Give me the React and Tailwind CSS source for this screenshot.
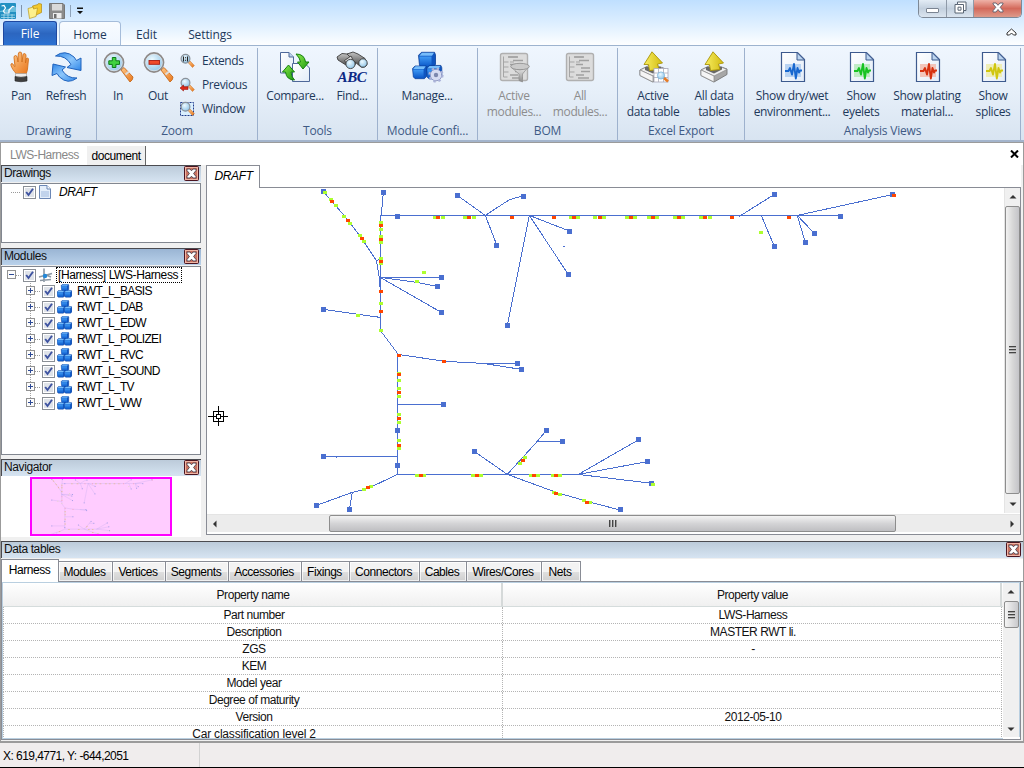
import React from "react";

const UI = "font-['Open_Sans','Noto_Sans',sans-serif]";
const SANS = "font-['Liberation_Sans',Arial,sans-serif]";

/* ---------- shared gradients ---------- */
function Defs() {
  return (
    <svg className="absolute h-0 w-0" aria-hidden="true">
      <defs>
        <linearGradient id="orange" x1="0" y1="0" x2="1" y2="1">
          <stop offset="0" stopColor="#ffc98a" />
          <stop offset="1" stopColor="#e8751a" />
        </linearGradient>
        <linearGradient id="blue" x1="0" y1="0" x2="0" y2="1">
          <stop offset="0" stopColor="#3f9af5" />
          <stop offset="1" stopColor="#0b57c8" />
        </linearGradient>
        <linearGradient id="sky" x1="0" y1="0" x2="1" y2="1">
          <stop offset="0" stopColor="#2f86e8" />
          <stop offset="0.5" stopColor="#8cc6fb" />
          <stop offset="1" stopColor="#2f86e8" />
        </linearGradient>
        <linearGradient id="green" x1="0" y1="0" x2="1" y2="1">
          <stop offset="0" stopColor="#8eea4a" />
          <stop offset="1" stopColor="#1d9b12" />
        </linearGradient>
        <linearGradient id="yellow" x1="0" y1="0" x2="1" y2="0">
          <stop offset="0" stopColor="#f8ee62" />
          <stop offset="1" stopColor="#d2bb10" />
        </linearGradient>
        <radialGradient id="lens" cx="0.4" cy="0.35" r="0.7">
          <stop offset="0" stopColor="#eefaff" />
          <stop offset="1" stopColor="#8cc2e6" />
        </radialGradient>
        <linearGradient id="paper" x1="0" y1="0" x2="1" y2="1">
          <stop offset="0" stopColor="#ffffff" />
          <stop offset="1" stopColor="#e2ecf8" />
        </linearGradient>
        <linearGradient id="steel" x1="0" y1="0" x2="0" y2="1">
          <stop offset="0" stopColor="#f4f4f4" />
          <stop offset="1" stopColor="#8c8c8c" />
        </linearGradient>
        <linearGradient id="dark" x1="0" y1="0" x2="0" y2="1">
          <stop offset="0" stopColor="#c4c4c4" />
          <stop offset="1" stopColor="#3c3c3c" />
        </linearGradient>
      </defs>
    </svg>
  );
}

const Icon = ({ children, size = 32 }) => (
  <svg viewBox="0 0 32 32" width={size} height={size} className="block shrink-0">
    {children}
  </svg>
);

const HandIcon = () => (
  <Icon>
    <path d="M11.500 23C8.500 19.500 7 17.500 6 14.500Q5.500 12.500 7 12.500Q8 12.500 9.500 15.500L10 15.500L9 6.500Q9 4.500 10.500 4.500Q12 4.500 12.300 6.500L13 11L13.300 3Q13.500 1 15 1Q16.700 1 16.800 3L17 11L18 4Q18.300 2.300 19.700 2.600Q21.200 3 21 5L20.500 12L21.200 8Q21.800 6.600 22.700 7Q23.700 7.500 23.400 9L22.500 18Q22 21 21 23Z" fill="url(#orange)" stroke="#d2701c" strokeWidth="0.900" />
    <path d="M10.500 22.500h11v3.500h-11z" fill="#ececec" stroke="#999" strokeWidth="0.600" />
    <path d="M10 25.500Q16 27.500 22 25.500V30Q16 31.500 10 30z" fill="#3f3f3f" stroke="#222" strokeWidth="0.600" />
  </Icon>
);

const RefreshIcon = () => (
  <Icon>
    <g stroke="#1f62bd" strokeWidth="1" strokeLinejoin="round" fill="url(#sky)">
      <path d="M5.500 5Q15-2 24 6L26.500 9.500L31 7V19.500L17 16.500L21 13.500Q16 4.500 5.500 5Z" />
      <path d="M27 27Q18 34 9.500 26L7 22.500L2 24.500L3 13L15.500 16L12 19Q17 27.500 27 27Z" />
    </g>
  </Icon>
);

const ZoomIcon = ({ minus }) => (
  <Icon>
    <path d="M19 19L22 16.500L31 26Q31 29 28 31Z" fill="url(#orange)" stroke="#c66a1c" strokeWidth="0.900" />
    <path d="M23.500 23.500L27 20.500" stroke="#ddd" strokeWidth="2" />
    <circle cx="12" cy="11.500" r="9.500" fill="url(#lens)" stroke="#8f8a88" strokeWidth="1.800" />
    <circle cx="12" cy="11.500" r="8.300" fill="none" stroke="#e4e8ec" strokeWidth="0.700" />
    {minus ? (
      <rect x="7" y="9.500" width="10.500" height="3.800" fill="#f04a2a" stroke="#a81c10" strokeWidth="0.900" />
    ) : (
      <path d="M10.300 6.500h3.600v3.300h3.600v3.600h-3.600v3.100h-3.600v-3.100H6.800V9.800h3.500z" fill="#3fd23f" stroke="#0c7a18" strokeWidth="1" />
    )}
  </Icon>
);

const MiniZoom = ({ kind }) => (
  <svg viewBox="0 0 16 16" width="16" height="16" className="block shrink-0">
    {kind === "window" && <rect x="1.500" y="1.500" width="13" height="13" fill="#d9efff" stroke="#203c8c" strokeWidth="1" strokeDasharray="2 1" />}
    <path d="M9 9.500L11 8L15.300 12.500L13.500 14.500Z" fill="url(#orange)" stroke="#c66a1c" strokeWidth="0.500" />
    <circle cx="6.500" cy="5.800" r="4.400" fill="url(#lens)" stroke="#8b929a" strokeWidth="1.200" />
    {kind === "extends" && <path d="M4.500 3.500v5M8.500 3.500v5M6.500 4.300v1M6.500 6.800v1" stroke="#222" strokeWidth="1.100" />}
    {kind === "previous" && <path d="M1 11l3.500-3v1.800H9v2.600H4.500V14z" fill="#e02a1a" stroke="#981008" strokeWidth="0.600" />}
  </svg>
);

const CompareIcon = () => (
  <Icon>
    <path d="M1.500 1.500H10L14.500 6V22H1.500Z" fill="url(#paper)" stroke="#4e6899" />
    <path d="M10 1.500V6H14.500" fill="#bcd3ee" stroke="#4e6899" />
    <path d="M13.500 12.500H26L30.500 17V30.500H13.500Z" fill="url(#paper)" stroke="#4e6899" />
    <path d="M17 3Q25.500 3 26.500 11H30L24 18L18.500 11H21.500Q21 7 17 3Z" fill="url(#green)" stroke="#15800f" />
    <path d="M15.500 29Q7.500 29 6.500 21H3.500L9.500 14L15.500 21H12Q12 25.500 15.500 29Z" fill="url(#green)" stroke="#15800f" />
  </Icon>
);

const FindIcon = () => (
  <svg viewBox="0 0 34 32" width="34" height="32" className="block shrink-0 overflow-visible">
    <g stroke="#3d3d3d" strokeWidth="0.900">
      <path d="M2 6L7 2.500L12 3L22 6.500L20 14Q17 18 12.500 15L3 9Z" fill="url(#dark)" />
      <path d="M12 3L18 1L23 3L30 7.500L32 13Q31 17 26 16L20 11Z" fill="url(#dark)" />
      <path d="M9.500 9.500L13 15L19 11L16 5Z" fill="url(#steel)" />
      <circle cx="15.500" cy="13" r="4.600" fill="url(#lens)" />
      <circle cx="28" cy="12" r="4.200" fill="url(#lens)" />
    </g>
    <text x="2.500" y="31" fontFamily="Liberation Serif, serif" fontStyle="italic" fontWeight="bold" fontSize="15.500" textLength="29" lengthAdjust="spacingAndGlyphs" fill="#0d2a86">ABC</text>
  </svg>
);

const Cube = ({ x, y, s = 1 }) => (
  <g transform={`translate(${x} ${y}) scale(${s})`}>
    <path d="M0 3.500L3 0.500H16L17 3V12.500L14 15.500H3L1 13.500Z" fill="#0f55c0" stroke="#0b3f98" strokeWidth="0.800" />
    <path d="M0.800 4L3.500 1H15.500L13.500 4Z" fill="#76bdfb" />
    <path d="M0.800 4.800H13V14.800H3L1.500 13Z" fill="url(#blue)" />
  </g>
);

const ManageIcon = () => (
  <svg viewBox="0 0 34 32" width="34" height="32" className="block shrink-0">
    <Cube x={8.500} y={0.800} />
    <Cube x={2.500} y={14.500} s={0.85} />
    <Cube x={16.500} y={14} s={0.9} />
    <circle cx="26" cy="24" r="5.800" fill="#d6dcf2" stroke="#8089b8" strokeWidth="0.800" />
    <circle cx="26" cy="24" r="6.500" fill="none" stroke="#aab2d8" strokeWidth="2.200" strokeDasharray="2.400 2.700" />
    <circle cx="26" cy="24" r="2.200" fill="#7d88ae" />
  </svg>
);

const ListIcon = ({ funnel }) => (
  <Icon>
    <rect x="2.500" y="2.500" width="27" height="27" rx="2" fill="#dcdcdc" stroke="#b0b0b0" strokeWidth="1.400" />
    <path d="M5.500 5.500v20.500h4M5.500 11h5M5.500 16h5M5.500 21h5M10.500 6h9M12 11h4" stroke="#a5a5a5" strokeWidth="1" fill="none" />
    <path d="M10 6h10M15 9.500h10M12 13.500h7M17 17h9M17 20.500h9M12 24h8M14 27h11" stroke="#a0a0a0" strokeWidth="1.500" />
    {funnel && (
      <>
        <path d="M13 16Q22 22 31 15L24.500 23V31L21 29.500V23Z" fill="url(#steel)" stroke="#8d8d8d" strokeWidth="0.700" />
        <ellipse cx="22" cy="15.500" rx="9.300" ry="3.200" fill="#cacaca" stroke="#8a8a8a" strokeWidth="0.800" />
      </>
    )}
  </Icon>
);

const ExportIcon = ({ grid }) => (
  <Icon>
    <path d="M3 19L15 13L29 18V23.500L16 31L3 24.500Z" fill="#a7a7a7" stroke="#777" strokeWidth="0.900" />
    <path d="M3 19L16 25L29 18.500L16 13Z" fill="#efefef" stroke="#8a8a8a" strokeWidth="0.700" />
    <path d="M3 19L16 25V31L3 24.500Z" fill="#f5f5f5" stroke="#888" strokeWidth="0.700" />
    <path d="M8 19L16 22.500L24 18.500V16H8Z" fill="#696969" />
    <path d="M15 0.800L25.500 12L20.500 13L22 18.500L12.500 19.500L11.500 13.500L7 13.500Z" fill="url(#yellow)" stroke="#a99408" strokeWidth="0.900" strokeLinejoin="round" />
    {grid && (
      <>
        <rect x="17" y="17.500" width="14" height="13.500" fill="#fff" stroke="#a9a9b8" strokeWidth="0.800" />
        <path d="M21.500 17.500v13.500M26.500 17.500v13.500M17 22h14M17 26.500h14" stroke="#a9a9b8" strokeWidth="0.800" />
        <path d="M26.500 26.500L31 30.500" stroke="#e87a22" strokeWidth="2.600" />
        <circle cx="24" cy="24.500" r="3.600" fill="url(#lens)" stroke="#7fb6dc" strokeWidth="0.800" />
      </>
    )}
  </Icon>
);

const WaveIcon = ({ c, tint }) => (
  <Icon>
    <path d="M5.500 1.500H21.500L28.500 8.500V30.500H5.500Z" fill="url(#paper)" stroke="#3d5a8e" strokeWidth="1.200" />
    <path d="M21 1.500V9H28.500Z" fill="#bcd5f0" stroke="#3d5a8e" strokeWidth="1" />
    <rect x="9" y="13" width="16" height="13" fill={tint} />
    <path d="M9 20H12.500L14 17L16 23.500L18 13L19.800 27.500L21.500 17L23 21.500L24 19.500H26" fill="none" stroke={c} strokeWidth="1.900" strokeLinejoin="round" />
  </Icon>
);

/* ---------- ribbon ---------- */
const Btn = ({ icon, l1, l2, w, off }) => (
  <div className={`${w} flex shrink-0 flex-col items-center pt-[3px] text-[12px] leading-4 tracking-[-0.350px] whitespace-nowrap ${off ? "text-[#8d8d8d]" : "text-[#1e395b]"}`}>
    {icon}
    <span className="mt-[5px]">{l1}</span>
    {l2 && <span>{l2}</span>}
  </div>
);

const Group = ({ label, w, pl = "", children }) => (
  <div className={`${w} flex shrink-0 flex-col border-r border-[#9db1cd]`}>
    <div className={`flex h-[75px] ${pl}`}>{children}</div>
    <div className="text-center text-[12px] leading-4 tracking-[-0.2px] whitespace-nowrap text-[#3e5a85]">{label}</div>
  </div>
);

const Small = ({ kind, label }) => (
  <div className="flex h-6 items-center gap-[7px] text-[12px] tracking-[-0.4px] text-[#1e395b]">
    <MiniZoom kind={kind} />
    {label}
  </div>
);

function Ribbon() {
  return (
    <div className={`${UI} flex h-[96px] shrink-0 border-b-2 border-[#a3b4cc] bg-linear-to-b from-[#eff6fe] via-[#e6eff9] to-[#d8e4f1] pt-[2px] pl-px`}>
      <Group label="Drawing" w="w-[96px]">
        <Btn w="w-[40px]" icon={<HandIcon />} l1="Pan" />
        <Btn w="w-[50px]" icon={<RefreshIcon />} l1="Refresh" />
      </Group>
      <Group label="Zoom" w="w-[161px]" pl="pl-px">
        <Btn w="w-[40px]" icon={<ZoomIcon />} l1="In" />
        <Btn w="w-[40px]" icon={<ZoomIcon minus />} l1="Out" />
        <div className="flex flex-col pt-px pl-px">
          <Small kind="extends" label="Extends" />
          <Small kind="previous" label="Previous" />
          <Small kind="window" label="Window" />
        </div>
      </Group>
      <Group label="Tools" w="w-[120px]" pl="pl-[5px]">
        <Btn w="w-[64px]" icon={<CompareIcon />} l1="Compare..." />
        <Btn w="w-[50px]" icon={<FindIcon />} l1="Find..." />
      </Group>
      <Group label="Module Confi..." w="w-[100px]">
        <Btn w="w-[98px]" icon={<ManageIcon />} l1="Manage..." />
      </Group>
      <Group label="BOM" w="w-[140px]" pl="pl-[3px]">
        <Btn w="w-[66px]" off icon={<ListIcon funnel />} l1="Active" l2="modules..." />
        <Btn w="w-[66px]" off icon={<ListIcon />} l1="All" l2="modules..." />
      </Group>
      <Group label="Excel Export" w="w-[127px]" pl="pl-[4px]">
        <Btn w="w-[62px]" icon={<ExportIcon grid />} l1="Active" l2="data table" />
        <Btn w="w-[60px]" icon={<ExportIcon />} l1="All data" l2="tables" />
      </Group>
      <Group label="Analysis Views" w="w-[276px]" pl="pl-[3px]">
        <Btn w="w-[88px]" icon={<WaveIcon c="#1767cf" tint="#b9d3f2" />} l1="Show dry/wet" l2="environment..." />
        <Btn w="w-[50px]" icon={<WaveIcon c="#17c322" tint="#c0ecc6" />} l1="Show" l2="eyelets" />
        <Btn w="w-[82px]" icon={<WaveIcon c="#d6300e" tint="#f3c5ba" />} l1="Show plating" l2="material..." />
        <Btn w="w-[50px]" icon={<WaveIcon c="#d0c60e" tint="#efeeb8" />} l1="Show" l2="splices" />
      </Group>
    </div>
  );
}

function TitleArea() {
  return (
    <div className={`${UI} flex h-[46px] shrink-0 flex-col border-b border-[#9db3cf] bg-linear-to-b from-[#bfdfff] via-[#dceeff] to-[#fdfeff]`}>
      <div className="flex h-[22px] justify-between">
        <div className="flex items-center">
          <svg width="16" height="16" viewBox="0 0 16 16" className="block">
            <rect width="16" height="16" rx="1" fill="#2290c2" />
            <path d="M0 8L16 4V9H0z" fill="#67bcdc" />
            <path d="M1.500 3L4 2.500L5.500 5L3.500 8L4.500 10H9V7L12.500 3.500L14.500 4" fill="none" stroke="#fff" strokeWidth="1.200" />
            <path d="M1 12h14M1 14.500h14M4 11v5M8 11v5M12 11v5" stroke="#a9dcee" strokeWidth="0.800" />
          </svg>
          <div className="mx-[5px] h-[12px] w-px bg-[#7f94ad]" />
          <svg width="16" height="16" viewBox="0 0 16 16" className="block">
            <path d="M5.500 3L11 1.500L11.500 0.500L14.500 1L14.500 9.500L7 13Z" fill="#f3c92d" stroke="#b08a12" strokeWidth="0.700" />
            <path d="M1 5.500L6.500 4V6L10.500 5L9 13.500L2.500 15.500Z" fill="#fdf08d" stroke="#bb9a1c" strokeWidth="0.700" />
          </svg>
          <svg width="16" height="16" viewBox="0 0 16 16" className="ml-[6px] block">
            <path d="M0.500 0.500H14L15.500 2V15.500H0.500Z" fill="#8b8b8b" stroke="#777" />
            <rect x="3" y="1" width="10" height="6.500" fill="#d9d9d9" />
            <rect x="4" y="10" width="8.500" height="5.500" fill="#ececec" />
            <rect x="5" y="11" width="2.500" height="4" fill="#6d6d6d" />
          </svg>
          <div className="ml-[5px] h-[12px] w-px bg-[#8fa3ba]" />
          <svg width="6" height="8" viewBox="0 0 6 8" className="ml-[6px] block">
            <path d="M0 0.500h6v1.500H0zM0 4h6L3 7z" fill="#111" />
          </svg>
        </div>
        <div className="mr-[2px] flex h-[18px] w-[104px] overflow-hidden rounded-b-[5px] border border-t-0 border-[#7d8896]">
          <div className="flex w-[28px] items-center justify-center border-r border-[#8f9aa8] bg-linear-to-b from-[#e3ecf5] via-[#c3d0de] to-[#dbe5ef]">
            <div className="mt-[4px] h-[5px] w-[13px] rounded-[1px] border border-[#7a8492] bg-white" />
          </div>
          <div className="flex w-[27px] items-center justify-center border-r border-[#8f9aa8] bg-linear-to-b from-[#e3ecf5] via-[#c3d0de] to-[#dbe5ef]">
            <svg width="13" height="13" viewBox="0 0 13 13" className="-mt-[2px]">
              <path d="M3.500 1H12V9.500H9.500V12H1V3.500H3.500Z" fill="#fff" stroke="#596473" />
              <path d="M3.500 3.500H9.500V9.500M4 6.200h3v3h-3z" fill="none" stroke="#596473" />
            </svg>
          </div>
          <div className="flex flex-1 items-center justify-center bg-linear-to-b from-[#eeb2a8] via-[#d3695b] to-[#dd9a8a]">
            <svg width="12" height="11" viewBox="0 0 12 11" className="-mt-[2px]">
              <path d="M1 1H4L6 3.300L8 1H11V2L8.200 5.300L11 8.800V10H8L6 7.500L4 10H1V8.800L3.800 5.300L1 2Z" fill="#fff" stroke="#5f5f6c" strokeWidth="0.900" />
            </svg>
          </div>
        </div>
      </div>
      <div className="flex h-[24px] pl-[3px] text-[12px] tracking-[-0.1px] text-[#1e395b]">
        <div className="flex h-[24px] w-[54px] items-center justify-center rounded-t-[3px] border border-b-0 border-[#1e48a0] bg-linear-to-b from-[#4b8be0] via-[#2c66c0] to-[#2b71d2] text-[12px] text-white">File</div>
        <div className="ml-[2px] flex h-[24px] w-[62px] items-center justify-center rounded-t-[4px] border border-b-0 border-[#a5bcda] bg-linear-to-b from-[#f8fbff] to-[#eff6fe] pt-[2px]">Home</div>
        <div className="flex w-[51px] items-center justify-center pt-[3px]">Edit</div>
        <div className="flex w-[76px] items-center justify-center pt-[3px]">Settings</div>
        <svg width="11" height="9" viewBox="0 0 11 9" className="mt-[7px] mr-[7px] ml-auto">
          <path d="M1 5L5.500 1L10 5V7H7.500L5.500 5L3.500 7H1Z" fill="#fff" stroke="#333" />
        </svg>
      </div>
    </div>
  );
}

/* ---------- side panels ---------- */
const CloseBox = () => (
  <svg width="15" height="15" viewBox="0 0 15 15" className="block">
    <rect x="0.500" y="0.500" width="14" height="14" rx="1" fill="#c9705f" stroke="#4a1420" />
    <rect x="1.500" y="1.500" width="12" height="12" fill="none" stroke="#f0b5a4" />
    <path d="M3 3H6L7.500 4.800L9 3H12V4.500L9.600 7.500L12 10.500V12H9L7.500 10.200L6 12H3V10.500L5.400 7.500L3 4.500Z" fill="#fff" stroke="#4d4450" strokeWidth="0.900" />
  </svg>
);

const PanelHead = ({ title, active }) => (
  <div className={`flex h-[17px] shrink-0 items-start justify-between border-t border-l border-[#4b4b50] pr-[2px] pl-[2px] text-[12px] tracking-[-0.4px] text-[#101010] ${active ? "bg-linear-to-b from-[#9ab5d4] to-[#b9d1ea]" : "bg-linear-to-b from-[#bccbda] to-[#d6e4f2]"}`}>
    <span className="leading-[15px]">{title}</span>
    <CloseBox />
  </div>
);

const Check = () => (
  <svg width="13" height="13" viewBox="0 0 13 13" className="block shrink-0">
    <rect x="0.500" y="0.500" width="12" height="12" fill="#fff" stroke="#8a8f96" />
    <rect x="2" y="2" width="9" height="9" fill="#dfe3e9" />
    <path d="M3.200 6L5.500 9L10 2.800" fill="none" stroke="#3d52a0" strokeWidth="1.900" />
  </svg>
);

const Expander = ({ open, last }) => (
  <svg width="9" height="16" viewBox="0 0 9 16" className="block shrink-0" shapeRendering="crispEdges">
    {!open && <path d={last ? "M4.500 0v4" : "M4.500 0v16"} stroke="#a0a0a0" strokeDasharray="1 1" />}
    <rect x="0.500" y="3.500" width="8" height="8" fill="#fcfcfc" stroke="#929292" />
    <path d={open ? "M2 7.500h5" : "M2 7.500h5M4.500 5v5"} stroke="#2d4a96" />
  </svg>
);

const CubesIcon = () => (
  <svg width="15" height="14" viewBox="0 0 33 31" className="block shrink-0">
    <Cube x={9} y={0} />
    <Cube x={0} y={14} />
    <Cube x={16} y={14} />
  </svg>
);

const modules = ["RWT_L_BASIS", "RWT_L_DAB", "RWT_L_EDW", "RWT_L_POLIZEI", "RWT_L_RVC", "RWT_L_SOUND", "RWT_L_TV", "RWT_L_WW"];

const BLUE = "#4a6fd0";

const lines = [
  "323,191 348,220 362,239 376,260 379,277 380,290",
  "383,192 381,215",
  "380,215 840,215",
  "380,215 380,330 398,354",
  "376,260 380,259",
  "457,195 485,215 508,200 516,197 523,196",
  "485,215 497,246",
  "529,215 507,325",
  "529,215 568,274",
  "529,215 570,231",
  "739,216 774,194",
  "761,215 774,246",
  "797,215 893,194",
  "797,215 814,233",
  "797,215 805,242",
  "379,277 441,277",
  "380,277 417,282 437,286",
  "380,277 441,312",
  "323,309 380,317",
  "398,354 445,361 483,363 517,363",
  "483,363 521,369",
  "397,354 397,474",
  "397,404 444,404",
  "323,456 398,456",
  "397,474 580,474",
  "397,474 368,488 352,492 316,505",
  "352,492 349,510",
  "474,451 507,474 536,442 546,430",
  "536,441 563,441",
  "507,474 556,492 587,501 621,510",
  "578,474 639,439",
  "578,474 648,461",
  "578,474 652,483",
];

const nodes = [
  [323, 191], [383, 192], [397, 216], [457, 195], [523, 196], [496, 245], [507, 325], [568, 274], [569, 231],
  [774, 194], [774, 246], [892, 194], [840, 216], [814, 233], [805, 242], [441, 277], [437, 286], [441, 312],
  [323, 309], [517, 363], [521, 369], [443, 404], [397, 430], [397, 465], [323, 456], [316, 505], [349, 509],
  [474, 451], [546, 430], [562, 441], [620, 509], [638, 439], [647, 461], [651, 483],
];

const greens = [
  [325, 192], [331, 199], [336, 205], [344, 216], [350, 223], [360, 235], [364, 241],
  [381, 222], [381, 229], [381, 236], [381, 242], [381, 258], [381, 263], [381, 303], [381, 330],
  [435, 217], [443, 217], [465, 217], [474, 217], [571, 217], [578, 217], [595, 217], [604, 217],
  [627, 217], [635, 217], [649, 217], [657, 217], [675, 217], [683, 217], [701, 217], [710, 217],
  [761, 232], [424, 272], [417, 281], [358, 315], [399, 373], [399, 380], [399, 388], [399, 396],
  [399, 414], [399, 422], [399, 440], [399, 448], [417, 475], [424, 475], [473, 475], [481, 475],
  [531, 475], [538, 475], [553, 475], [560, 475], [525, 457], [520, 463], [364, 489], [371, 486],
  [554, 492], [560, 494], [584, 500], [590, 502], [653, 484],
];

const reds = [
  [332, 201], [348, 220], [362, 238], [381, 225], [381, 239], [381, 261], [381, 291], [381, 311],
  [438, 217], [469, 217], [512, 217], [554, 217], [574, 217], [600, 217], [631, 217], [653, 217],
  [679, 217], [705, 217], [732, 217], [789, 217], [894, 195], [399, 355], [444, 361], [399, 374],
  [399, 392], [399, 418], [399, 445], [421, 475], [477, 475], [534, 475], [556, 475], [523, 460],
  [368, 487], [556, 493], [587, 502],
];

function Wiring() {
  return (
    <>
      {lines.map((p) => (
        <polyline key={p} points={p} fill="none" stroke={BLUE} strokeWidth="1" transform="translate(0.300 0.400)" />
      ))}
      {nodes.map(([x, y]) => (
        <rect key={`${x}-${y}`} x={x - 2} y={y - 2} width="5" height="5" fill={BLUE} />
      ))}
      {greens.map(([x, y]) => (
        <rect key={`${x}-${y}`} x={x - 2} y={y - 1} width="4" height="3" fill="#adff2f" />
      ))}
      {reds.map(([x, y]) => (
        <rect key={`${x}-${y}`} x={x - 2} y={y - 1} width="4" height="3" fill="#ff4500" />
      ))}
    </>
  );
}

function Sidebar() {
  return (
    <div className="flex w-[200px] shrink-0 flex-col">
      <PanelHead title="Drawings" />
      <div className="mt-px h-[60px] shrink-0 border border-[#828790] bg-white pl-[9px]">
        <div className="flex h-4 items-center">
          <div className="w-[9px] border-t border-dotted border-[#999]" />
          <div className="ml-[3px]"><Check /></div>
          <svg width="12" height="14" viewBox="0 0 12 14" className="ml-[3px] block">
            <path d="M0.500 0.500H8L11.500 4V13.500H0.500Z" fill="#e4eefa" stroke="#6b87b5" />
            <path d="M8 0.500V4H11.500" fill="#fff" stroke="#6b87b5" />
            <path d="M2 7h8M2 9h8M2 11h8" stroke="#9fb9de" />
          </svg>
          <span className="ml-[8px] text-[12px] leading-4 tracking-[-0.450px] italic">DRAFT</span>
        </div>
      </div>
      <div className="mt-[5px] flex flex-col">
        <PanelHead title="Modules" active />
        <div className="mt-px h-[189px] border border-[#828790] bg-white">
          <div className="flex h-4 items-center pl-[5px]">
            <Expander open />
            <div className="w-[5px] border-t border-dotted border-[#999]" />
            <div className="ml-[2px]"><Check /></div>
            <svg width="15" height="15" viewBox="0 0 15 15" className="ml-[2px] block">
              <path d="M6 0.500V14M1 9L14 5.500M2 12.500L13 11.500M8 7L13 9" stroke="#8a97a3" strokeWidth="1.600" />
              <circle cx="7" cy="8" r="2.200" fill="#2288d8" />
            </svg>
            <span className="ml-[3px] h-4 w-[126px] border border-dotted border-black pl-px text-[12px] leading-[14px] tracking-[-0.4px] whitespace-nowrap">[Harness] LWS-Harness</span>
          </div>
          {modules.map((m, i) => (
            <div key={m} className="flex h-4 items-center pl-[24px]">
              <Expander last={i === modules.length - 1} />
              <div className="w-[5px] border-t border-dotted border-[#999]" />
              <div className="ml-[2px]"><Check /></div>
              <div className="ml-[2px]"><CubesIcon /></div>
              <span className="ml-[5px] text-[12px] leading-4 tracking-[-0.7px]">{m}</span>
            </div>
          ))}
        </div>
      </div>
      <div className="mt-[4px] flex flex-col">
        <PanelHead title="Navigator" />
        <div className="flex h-[61px] bg-white pt-px pl-[29px]">
          <div className="h-[59px] w-[142px] border-2 border-[#ff00ff] bg-[#ffccff]">
            <svg width="138" height="55" viewBox="211 190 784 312" className="block opacity-60">
              <Wiring />
            </svg>
          </div>
        </div>
      </div>
    </div>
  );
}

/* ---------- drawing canvas ---------- */
const Arrow = ({ d }) => (
  <svg width="8" height="8" viewBox="0 0 8 8" className="block shrink-0"><path d={d} fill="#333" /></svg>
);
const UP = "M0.500 5.500L4 2L7.500 5.500Z";
const DOWN = "M0.500 2.500L4 6L7.500 2.500Z";
const LEFT = "M5.500 0.500L2 4L5.500 7.500Z";
const RIGHT = "M2.500 0.500L6 4L2.500 7.500Z";

const VGrip = () => (
  <div className="flex w-[7px] flex-col gap-px">
    <div className="h-[2px] border-t border-[#444] bg-[#aaa]" />
    <div className="h-[2px] border-t border-[#444] bg-[#aaa]" />
    <div className="h-[2px] border-t border-[#444] bg-[#aaa]" />
  </div>
);

const tab = "border-[#898c95]";

function Canvas() {
  return (
    <div className="ml-[5px] flex w-[815px] shrink-0 flex-col">
      <div className="flex h-[23px] shrink-0">
        <div className={`flex w-[54px] items-center justify-center border-t border-r border-l bg-white pb-[3px] pl-px text-[12px] tracking-[-0.350px] italic ${tab}`}>DRAFT</div>
        <div className={`flex-1 border-b bg-white ${tab}`} />
      </div>
      <div className={`flex h-[347px] flex-col border-r border-b border-l bg-white ${tab}`}>
        <div className="flex h-[325px]">
          <svg width="797" height="325" viewBox="207 188 797 325" className="block shrink-0" shapeRendering="crispEdges">
            <Wiring />
            <path d="M563 246.500h2M336 457.500h1" stroke={BLUE} />
            <path d="M208 416.500h8M221 416.500h7M218.500 406v8M218.500 419v7M213.500 411.500h10v10h-10zM216.500 414.500h4v4h-4z" fill="none" stroke="#000" />
          </svg>
          <div className="flex w-[16px] flex-col items-center border-l border-[#e4e4e4] bg-[#f0f0f0]">
            <div className="flex h-[18px] items-center"><Arrow d={UP} /></div>
            <div className="flex h-[288px] w-[15px] items-center justify-center rounded-[2px] border border-[#8d8d8d] bg-linear-to-r from-[#f2f2f2] via-[#d8d8d8] to-[#c4c4c8]"><VGrip /></div>
            <div className="flex flex-1 items-center"><Arrow d={DOWN} /></div>
          </div>
        </div>
        <div className="mt-px flex h-[18px] items-center border-t border-[#e4e4e4] bg-[#ececec]">
          <div className="flex w-[122px] pl-[4px]"><Arrow d={LEFT} /></div>
          <div className="flex h-[17px] w-[567px] items-center justify-center gap-px rounded-[2px] border border-[#8d8d8d] bg-linear-to-b from-[#f4f4f4] via-[#d4d4d6] to-[#bfbfc2]">
            <div className="h-[7px] w-[2px] border-l border-[#444] bg-[#999]" />
            <div className="h-[7px] w-[2px] border-l border-[#444] bg-[#999]" />
            <div className="h-[7px] w-[2px] border-l border-[#444] bg-[#999]" />
          </div>
          <div className="flex flex-1 justify-end pr-[4px]"><Arrow d={RIGHT} /></div>
        </div>
      </div>
    </div>
  );
}

/* ---------- data tables ---------- */
const tabs = [
  ["Modules", "w-[54px]"], ["Vertices", "w-[53px]"], ["Segments", "w-[63px]"], ["Accessories", "w-[73px]"],
  ["Fixings", "w-[48px]"], ["Connectors", "w-[70px]"], ["Cables", "w-[47px]"], ["Wires/Cores", "w-[75px]"], ["Nets", "w-[39px]"],
];

const rows = [
  ["Part number", "LWS-Harness"], ["Description", "MASTER RWT li."], ["ZGS", "-"], ["KEM", ""],
  ["Model year", ""], ["Degree of maturity", ""], ["Version", "2012-05-10"], ["Car classification level 2", ""],
];

function DataTables() {
  return (
    <div className="mt-[6px] flex flex-col">
      <PanelHead title="Data tables" />
      <div className="mt-px flex h-[23px] items-end bg-white text-[12px] tracking-[-0.450px]">
        <div className={`flex h-[23px] w-[58px] items-center justify-center border-t border-r border-l bg-white pr-px pb-[2px] ${tab}`}>Harness</div>
        {tabs.map(([name, w]) => (
          <div key={name} className={`${w} flex h-[21px] shrink-0 items-center justify-center border-t border-r border-b bg-linear-to-b from-[#f3f3f3] from-50% via-[#e0e0e0] via-50% to-[#cfcfcf] pr-[2px] inset-ring inset-ring-white/70 ${tab}`}>{name}</div>
        ))}
        <div className={`flex-1 self-stretch border-b ${tab}`} />
      </div>
      <div className={`mr-[2px] flex h-[158px] border-r border-b border-l bg-white ${tab}`}>
        <div className="flex w-[1002px] flex-col overflow-hidden border border-r-0 border-[#b9cfe0] text-[12px] tracking-[-0.450px] text-[#111]">
          <div className="flex h-[24px] shrink-0 border-b border-[#d5dcdc] bg-linear-to-b from-white to-[#f0f0f0]">
            <div className="flex w-[500px] items-center justify-center border-r-2 border-[#d5d9d9] pl-[2px]">Property name</div>
            <div className="flex w-[499px] items-center justify-center border-r-2 border-[#d5d9d9] pl-[2px]">Property value</div>
          </div>
          {rows.map(([k, v]) => (
            <div key={k} className={`flex h-[17px] w-[999px] shrink-0 border-r border-b border-l border-dotted border-[#b4b4b4] leading-4 ${k.length > 20 ? "tracking-[-0.2px]" : ""}`}>
              <div className="w-[500px] border-r border-dotted border-[#b4b4b4] pl-[2px] text-center">{k}</div>
              <div className="w-[499px] pl-[2px] text-center">{v}</div>
            </div>
          ))}
        </div>
        <div className="mb-[2px] flex w-[17px] flex-col items-center border-t border-r border-[#b9cfe0] bg-[#f0f0f0]">
          <div className="flex h-[18px] items-center"><Arrow d={UP} /></div>
          <div className="flex h-[27px] w-[15px] items-center justify-center rounded-[2px] border border-[#8d8d8d] bg-linear-to-r from-[#f5f5f5] to-[#c9c9cc]"><VGrip /></div>
          <div className="mt-auto flex h-[17px] items-center"><Arrow d={DOWN} /></div>
        </div>
      </div>
    </div>
  );
}

export default function App() {
  return (
    <div className={`${SANS} flex h-[768px] w-[1024px] flex-col overflow-hidden bg-[#f0f0f0] text-black`}>
      <Defs />
      <TitleArea />
      <Ribbon />
      <div className="flex h-[601px] shrink-0 flex-col border border-b-2 border-[#9b9b9b]">
        <div className="flex h-[22px] shrink-0 bg-white text-[12px] tracking-[-0.450px]">
          <div className="mt-[2px] ml-px flex w-[85px] items-center justify-center text-[#888]">LWS-Harness</div>
          <div className="mt-[3px] flex w-[59px] items-center justify-center border-r border-[#666] bg-[#f0f0f0]">document</div>
          <svg width="9" height="8" viewBox="0 0 9 8" className="mt-[7px] mr-[4px] ml-auto">
            <path d="M1 0.500L8 7.500M8 0.500L1 7.500" stroke="#000" strokeWidth="2" />
          </svg>
        </div>
        <div className="flex h-[370px] shrink-0">
          <Sidebar />
          <Canvas />
        </div>
        <DataTables />
      </div>
      <div className="flex h-[24px] shrink-0 items-center bg-[#f0eded] text-[12px] tracking-[-0.550px]">
        <div className="flex h-[24px] w-[200px] items-center border-r border-[#d2d2d2] pt-px pl-[3px]">X: 619,4771, Y: -644,2051</div>
      </div>
      <div className="h-px bg-black" />
    </div>
  );
}
